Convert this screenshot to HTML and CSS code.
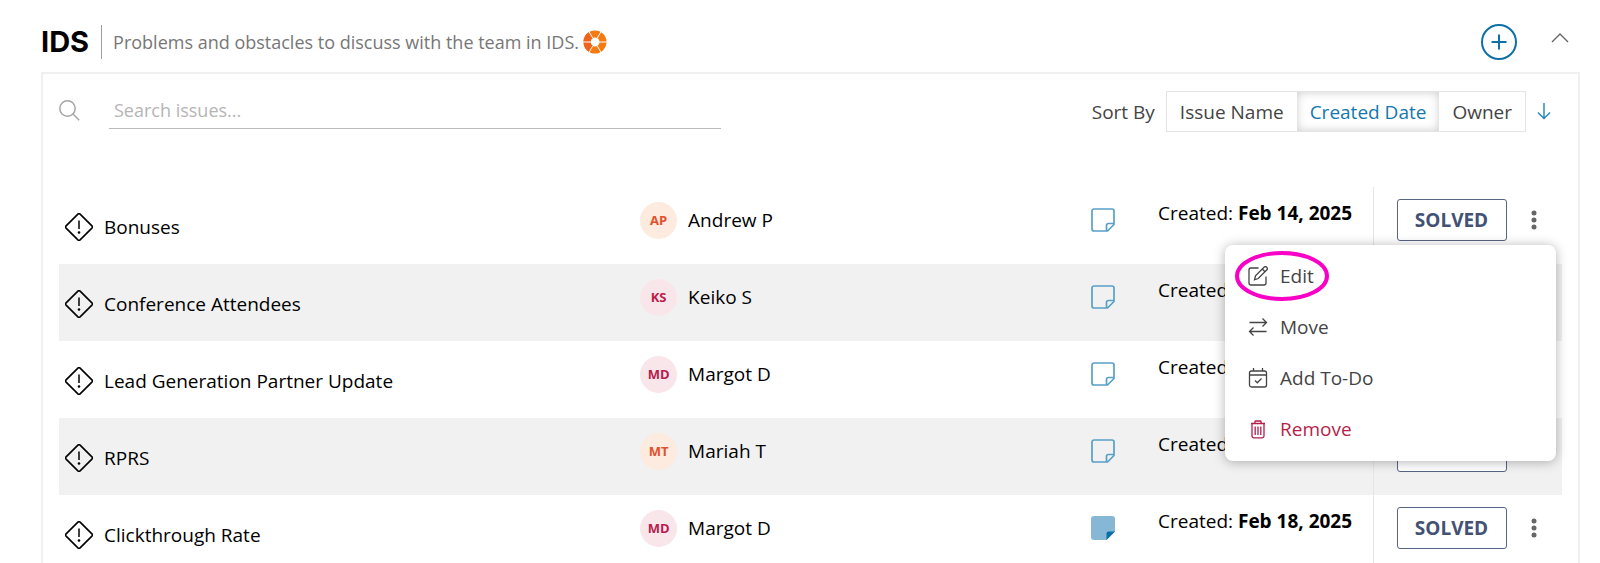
FILE: index.html
```
<!DOCTYPE html>
<html lang="en">
<head>
<meta charset="utf-8">
<title>IDS</title>
<link rel="stylesheet" href="styles.css">
</head>
<body>
<svg class="sprite" aria-hidden="true">
  <symbol id="issue" viewBox="0 0 28 28"><path d="M12.9 1.1a1.6 1.6 0 0 1 2.2 0l11.8 11.8a1.6 1.6 0 0 1 0 2.2L15.1 26.900a1.600 1.600 0 0 1-2.200 0L1.100 15.100a1.600 1.600 0 0 1 0-2.200z" fill="none" stroke="#000" stroke-width="1.600"/><path d="M14 7.500v8.500" stroke="#000" stroke-width="1.500"/><circle cx="14" cy="19.500" r="1.300"/></symbol>
  <symbol id="note" viewBox="0 0 24 24"><path d="M3 1h18a2 2 0 0 1 2 2v13.500L16.500 23H3a2 2 0 0 1-2-2V3a2 2 0 0 1 2-2zM15.500 23v-5.500a2 2 0 0 1 2-2H23" fill="none" stroke="#58a0c6" stroke-width="1.700"/></symbol>
  <symbol id="note-full" viewBox="0 0 24 24"><path d="M3 0h18a3 3 0 0 1 3 3v12.500L15.500 24H3a3 3 0 0 1-3-3V3a3 3 0 0 1 3-3z" fill="#86b8d6"/><path d="M15.500 24v-6.500a2 2 0 0 1 2-2H24z" fill="#0a6ea8"/></symbol>
  <symbol id="dots" viewBox="0 0 6 20"><circle cx="3" cy="3" r="2.500"/><circle cx="3" cy="10" r="2.500"/><circle cx="3" cy="17" r="2.500"/></symbol>
</svg>

<header class="head">
  <h1 class="title">IDS</h1>
  <p class="lead">Problems and obstacles to discuss with the team in IDS.</p>
  <a class="help" href="#help" aria-label="Help">
    <svg viewBox="0 0 24 24" width="24" height="24"><circle cx="12" cy="12" r="8" fill="none" stroke="#f57a12" stroke-width="7"/><path d="M4 12A8 8 0 0 1 8 5.100M4 12A8 8 0 0 0 8 18.900" fill="none" stroke="#f0641a" stroke-width="7"/><path d="M9.800 8.200L5.800 1.300M14.200 8.200L18.200 1.300M9.800 15.800L5.800 22.700M14.200 15.800L18.200 22.700M0 12h8M16 12h8" stroke="#fff" stroke-width="1"/></svg>
  </a>
  <button class="add" type="button" aria-label="Add issue"><svg viewBox="0 0 36 36" width="36" height="36" fill="none" stroke="#0d70a6" stroke-width="2"><circle cx="18" cy="18" r="17"/><path d="M18 10.500v15M10.500 18h15"/></svg></button>
  <button class="fold" type="button" aria-label="Collapse"><svg viewBox="0 0 18 10" width="18" height="10" fill="none" stroke="#666" stroke-width="1.400"><path d="M1 9l8-8 8 8"/></svg></button>
</header>

<main class="panel">
  <div class="tools">
    <label class="lens" for="search" aria-label="Search issues"><svg viewBox="0 0 21 21" width="21" height="21" fill="none" stroke="#a6a6a6" stroke-width="1.500"><circle cx="8.500" cy="8.500" r="7.700"/><path d="M14 14l6.200 6.200"/></svg></label>
    <input class="search" id="search" type="text" placeholder="Search issues...">
    <div class="sort">
      <span>Sort By</span>
      <div class="group">
        <button type="button" class="opt">Issue Name</button>
        <button type="button" class="opt opt-on">Created Date</button>
        <button type="button" class="opt">Owner</button>
      </div>
      <button class="dir" type="button" aria-label="Sort direction"><svg viewBox="0 0 14 17" width="14" height="17" fill="none" stroke="#2583b5" stroke-width="1.400"><path d="M7 0v15.500M1 9.500l6 6 6-6"/></svg></button>
    </div>
  </div>

  <table class="issues">
    <colgroup><col><col class="c-owner"><col class="c-note"><col class="c-date"><col class="c-act"></colgroup>
    <tbody>
    <tr>
      <td class="name"><div class="line"><svg class="ico"><use href="#issue"/></svg>Bonuses</div></td>
      <td><div class="cell"><span class="face orange">AP</span>Andrew P</div></td>
      <td><div class="cell"><svg class="note"><use href="#note"/></svg></div></td>
      <td class="date">Created: <b>Feb 14, 2025</b></td>
      <td class="act"><div class="cell"><button class="solved" type="button">SOLVED</button><button class="more" type="button" aria-label="More"><svg class="dots"><use href="#dots"/></svg></button>
        <div class="menu">
          <button class="item" type="button"><svg viewBox="0 0 20 20" class="mi"><path d="M10.500 2H3a2 2 0 0 0-2 2v13a2 2 0 0 0 2 2h13a2 2 0 0 0 2-2v-6.500"/><path d="M6.500 13.800l1-4L16 1.300a1.800 1.800 0 0 1 2.700 2.700l-8.500 8.500zM14.300 3l2.700 2.700"/></svg>Edit
            <svg class="ring" viewBox="0 0 94 50" aria-hidden="true"><ellipse cx="47" cy="25" rx="45" ry="23"/></svg></button>
          <button class="item" type="button"><svg viewBox="0 0 20 20" class="mi"><path d="M1.500 5.500h17M14.500 1.500l4 4-4 4M18.500 14.500h-17M5.500 10.500l-4 4 4 4"/></svg>Move</button>
          <button class="item" type="button"><svg viewBox="0 0 20 20" class="mi"><rect x="1.500" y="3" width="17" height="16" rx="2"/><path d="M1.500 7h17M5.500 0v3M14.500 0v3M7 12.500l2.300 2.300L13.500 10.500"/></svg>Add To-Do</button>
          <button class="item red" type="button"><svg viewBox="0 0 20 20" class="mi"><path d="M3 4.500h14M6.500 4.500l.8-2.500h5.400l.8 2.500M4 4.500V17a1.800 1.800 0 0 0 1.800 1.800h8.400A1.800 1.800 0 0 0 16 17V4.500M7.200 7.500v8.500M10 7.500v8.500M12.800 7.500v8.500"/></svg>Remove</button>
        </div></div></td>
    </tr>
    <tr>
      <td class="name"><div class="line"><svg class="ico"><use href="#issue"/></svg>Conference Attendees</div></td>
      <td><div class="cell"><span class="face pink">KS</span>Keiko S</div></td>
      <td><div class="cell"><svg class="note"><use href="#note"/></svg></div></td>
      <td class="date">Created:</td>
      <td class="act"></td>
    </tr>
    <tr>
      <td class="name"><div class="line"><svg class="ico"><use href="#issue"/></svg>Lead Generation Partner Update</div></td>
      <td><div class="cell"><span class="face pink">MD</span>Margot D</div></td>
      <td><div class="cell"><svg class="note"><use href="#note"/></svg></div></td>
      <td class="date">Created:</td>
      <td class="act"></td>
    </tr>
    <tr>
      <td class="name"><div class="line"><svg class="ico"><use href="#issue"/></svg>RPRS</div></td>
      <td><div class="cell"><span class="face orange">MT</span>Mariah T</div></td>
      <td><div class="cell"><svg class="note"><use href="#note"/></svg></div></td>
      <td class="date">Created:</td>
      <td class="act"><div class="cell"><button class="solved" type="button" aria-label="Solved"></button></div></td>
    </tr>
    <tr>
      <td class="name"><div class="line"><svg class="ico"><use href="#issue"/></svg>Clickthrough Rate</div></td>
      <td><div class="cell"><span class="face pink">MD</span>Margot D</div></td>
      <td><div class="cell"><svg class="note"><use href="#note-full"/></svg></div></td>
      <td class="date">Created: <b>Feb 18, 2025</b></td>
      <td class="act"><div class="cell"><button class="solved" type="button">SOLVED</button><button class="more" type="button" aria-label="More"><svg class="dots"><use href="#dots"/></svg></button></div></td>
    </tr>
    </tbody>
  </table>
</main>
</body>
</html>
```
FILE: styles.css
```
* { box-sizing: border-box; }
html { overflow: hidden; }
body { margin: 0; padding: 24px 20px 0 41px; background: #fff; color: #000; font: 19px/28px "Open Sans", "Noto Sans", sans-serif; }
button { padding: 0; border: 0; background: none; font: inherit; color: inherit; }
svg { display: block; flex: none; }
.sprite { position: absolute; width: 0; height: 0; }

.head { display: flex; align-items: center; height: 48px; padding-bottom: 12px; padding-right: 11px; }
.title { margin: 0; padding-right: 12px; font: 700 29px/34px Inter, sans-serif; }
.lead { margin: 0; padding-left: 11px; border-left: 1px solid #9aa0a6; line-height: 34px; font-size: 18px; color: #777; }
.help { margin-left: 4px; }
.add { margin-left: auto; }
.fold { margin: 0 0 8px 34px; }

.panel { border: 2px solid #f0f0f0; border-bottom: 0; padding: 17px 16px 0; }
.tools { display: flex; align-items: flex-start; height: 96px; color: #444; }
.lens { padding: 9px 29px 0 0; }
.search { width: 612px; height: 38px; padding: 0 5px; border: 0; border-bottom: 1px solid #bbb; outline: 0; background: none; font: inherit; font-size: 18px; }
.search::placeholder { color: #b5b5b5; opacity: 1; }
.sort { display: flex; align-items: center; gap: 11px; margin-left: auto; padding-right: 11px; }
.group { display: flex; border: 1px solid #e4e4e4; }
.opt { height: 39px; padding: 0 13px; }
.opt-on { color: #1478ad; box-shadow: inset 0 0 10px #ccc; }

.issues { width: 100%; border-collapse: collapse; table-layout: fixed; }
.c-owner { width: 30%; }
.c-note { width: 67px; }
.c-date { width: 215px; }
.c-act { width: 189px; }
.issues tr { height: 77px; }
.issues tr:nth-child(even) { background: #f1f1f1; }
.issues td { padding: 12px 0 0; vertical-align: top; white-space: nowrap; }
.issues .name { padding: 2px 0 0 6px; vertical-align: middle; }
.line { display: flex; align-items: center; gap: 11px; }
.cell { display: flex; align-items: center; height: 42px; }
.ico { width: 28px; height: 28px; }
.face { width: 37px; height: 37px; margin-right: 11px; border-radius: 50%; font-weight: 700; font-size: 13px; line-height: 37px; text-align: center; }
.orange { background: #fcebde; color: #e2502c; }
.pink { background: #f9e6eb; color: #b91c4b; }
.note { width: 24px; height: 24px; }
.issues .act { padding-left: 23px; border-left: 1px solid #e6e6e6; }
.act .cell { position: relative; }
.solved { width: 110px; height: 42px; border: 1px solid #5a6484; border-radius: 3px; background: #fff; color: #435174; font-weight: 700; }
.more { padding: 0 14px; margin-left: 10px; }
.dots { width: 6px; height: 20px; fill: #666; }

.menu { position: absolute; z-index: 1; top: 46px; right: 6px; width: 331px; padding: 5px 0 7px; border-radius: 8px; background: #fff; box-shadow: 0 1px 12px rgba(0, 0, 0, .3); color: #444; }
.item { position: relative; display: flex; align-items: center; gap: 12px; width: 100%; height: 51px; padding-left: 23px; }
.mi { width: 20px; height: 20px; fill: none; stroke: currentColor; stroke-width: 1.3; }
.red { color: #b51f4a; }
.ring { position: absolute; left: 10px; top: 1px; width: 94px; height: 50px; fill: none; stroke: #f800c6; stroke-width: 4; }
```
